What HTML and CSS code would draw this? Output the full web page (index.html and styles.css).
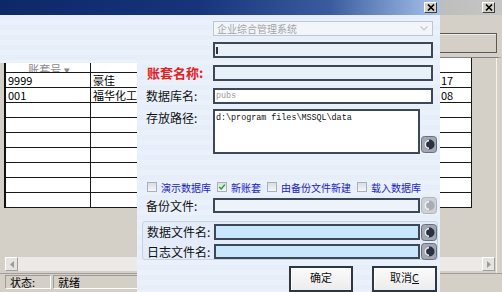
FILE: index.html
```html
<!DOCTYPE html>
<html lang="zh-CN">
<head>
    <meta charset="UTF-8">
    <title>账套管理</title>
    <link rel="stylesheet" href="styles.css">
</head>
<body>
    <div class="app">
        <div class="app-title">
            <span class="cap-btn"><svg viewBox="0 0 8 7" width="8" height="7"><path d="M1 0.5 L7 6.5 M7 0.5 L1 6.5" stroke="#000" stroke-width="1.6"/></svg></span>
        </div>
        <div class="app-toolbar"><div class="tool-box"></div></div>
        <div class="grid-area">
            <div class="grid">
                <div class="grid-row head"><div class="cell c1">账套号 ▾</div><div class="cell c2"></div><div class="cell c3"></div><div class="cell c4"></div></div>
                <div class="grid-row"><div class="cell c1">9999</div><div class="cell c2">豪佳</div><div class="cell c3"></div><div class="cell c4">17</div></div>
                <div class="grid-row"><div class="cell c1">001</div><div class="cell c2">福华化工</div><div class="cell c3"></div><div class="cell c4">08</div></div>
                <div class="grid-row"><div class="cell c1"></div><div class="cell c2"></div><div class="cell c3"></div><div class="cell c4"></div></div>
                <div class="grid-row"><div class="cell c1"></div><div class="cell c2"></div><div class="cell c3"></div><div class="cell c4"></div></div>
                <div class="grid-row"><div class="cell c1"></div><div class="cell c2"></div><div class="cell c3"></div><div class="cell c4"></div></div>
                <div class="grid-row"><div class="cell c1"></div><div class="cell c2"></div><div class="cell c3"></div><div class="cell c4"></div></div>
                <div class="grid-row"><div class="cell c1"></div><div class="cell c2"></div><div class="cell c3"></div><div class="cell c4"></div></div>
                <div class="grid-row"><div class="cell c1"></div><div class="cell c2"></div><div class="cell c3"></div><div class="cell c4"></div></div>
                <div class="grid-row"><div class="cell c1"></div><div class="cell c2"></div><div class="cell c3"></div><div class="cell c4"></div></div>
            </div>
            <div class="grid-fill"></div>
            <div class="hscroll">
                <span class="sb-btn"><svg viewBox="0 0 4 7" width="4" height="7"><path d="M4 0 L0 3.5 L4 7 Z" fill="#9a9a9a"/></svg></span>
                <span class="sb-track"></span>
                <span class="sb-btn"><svg viewBox="0 0 4 7" width="4" height="7"><path d="M0 0 L4 3.5 L0 7 Z" fill="#9a9a9a"/></svg></span>
            </div>
        </div>
        <div class="statusbar">
            <span class="panel p1">状态:</span>
            <span class="panel p2">就绪</span>
        </div>
    </div>

    <div class="dialog">
        <div class="dlg-title">
            <span class="cap-btn"><svg viewBox="0 0 8 7" width="8" height="7"><path d="M1 0.5 L7 6.5 M7 0.5 L1 6.5" stroke="#000" stroke-width="1.6"/></svg></span>
        </div>
        <div class="dlg-body">
            <div class="dlg-band"></div>
            <div class="dlg-form">
                <div class="row r-combo">
                    <span class="lbl"></span>
                    <div class="combo">企业综合管理系统<svg viewBox="0 0 8 5" width="8" height="5"><path d="M0.5 0.5 L4 4 L7.5 0.5" stroke="#c4c8d0" stroke-width="1.2" fill="none"/></svg></div>
                </div>
                <div class="row r-code">
                    <span class="lbl"></span>
                    <div class="field"><span class="caret"></span></div>
                </div>
                <div class="row r-name">
                    <span class="lbl red">账套名称:</span>
                    <div class="field"></div>
                </div>
                <div class="row r-db">
                    <span class="lbl">数据库名:</span>
                    <div class="field white mono gray">pubs</div>
                </div>
                <div class="row r-path">
                    <span class="lbl top">存放路径:</span>
                    <div class="field white mono area">d:\program files\MSSQL\data</div>
                    <span class="ico">
                        <svg viewBox="0 0 16 17" width="16" height="17"><rect x="0.5" y="0.5" width="15" height="16" rx="3" fill="#a2a8b2" stroke="#687080"/><circle cx="8.5" cy="8.5" r="5" fill="#2a3242"/><path d="M8 3.8 A4.7 4.7 0 0 0 8 13.2 L8 11.4 A2.9 2.9 0 0 1 8 5.6 Z" fill="#e4e7ec"/></svg>
                    </span>
                </div>
                <div class="checks">
                    <label class="chk"><span class="box"></span>演示数据库</label>
                    <label class="chk"><span class="box"><svg viewBox="0 0 10 10" width="8" height="8"><path d="M1.5 5 L4 7.5 L8.5 2" stroke="#1f9e2a" stroke-width="1.8" fill="none"/></svg></span>新账套</label>
                    <label class="chk"><span class="box"></span>由备份文件新建</label>
                    <label class="chk"><span class="box"></span>载入数据库</label>
                </div>
                <div class="row r-bak">
                    <span class="lbl">备份文件:</span>
                    <div class="field pale short"></div>
                    <span class="ico">
                        <svg viewBox="0 0 16 17" width="16" height="17"><rect x="0.5" y="0.5" width="15" height="16" rx="3" fill="#cdd1d6" stroke="#b0b5bc"/><circle cx="8.5" cy="8.5" r="5" fill="#a8adb4"/><path d="M8 3.8 A4.7 4.7 0 0 0 8 13.2 L8 11.4 A2.9 2.9 0 0 1 8 5.6 Z" fill="#eef0f2"/></svg>
                    </span>
                </div>
                <div class="files">
                    <div class="row r-data">
                        <span class="lbl">数据文件名:</span>
                        <div class="field cyan short"></div>
                        <span class="ico">
                            <svg viewBox="0 0 16 17" width="16" height="17"><rect x="0.5" y="0.5" width="15" height="16" rx="3" fill="#a2a8b2" stroke="#687080"/><circle cx="8.5" cy="8.5" r="5" fill="#2a3242"/><path d="M8 3.8 A4.7 4.7 0 0 0 8 13.2 L8 11.4 A2.9 2.9 0 0 1 8 5.6 Z" fill="#e4e7ec"/></svg>
                        </span>
                    </div>
                    <div class="row r-log">
                        <span class="lbl">日志文件名:</span>
                        <div class="field cyan short"></div>
                        <span class="ico">
                            <svg viewBox="0 0 16 17" width="16" height="17"><rect x="0.5" y="0.5" width="15" height="16" rx="3" fill="#a2a8b2" stroke="#687080"/><circle cx="8.5" cy="8.5" r="5" fill="#2a3242"/><path d="M8 3.8 A4.7 4.7 0 0 0 8 13.2 L8 11.4 A2.9 2.9 0 0 1 8 5.6 Z" fill="#e4e7ec"/></svg>
                        </span>
                    </div>
                </div>
                <div class="buttons">
                    <button class="btn">确定</button>
                    <button class="btn">取消<u>C</u></button>
                </div>
            </div>
        </div>
    </div>
</body>
</html>
```

FILE: styles.css
```css
* {
    box-sizing: border-box;
}
body {
    margin: 0;
    width: 502px;
    height: 292px;
    overflow: hidden;
    position: relative;
    background: #d4d0c8;
    font-family: "Noto Sans CJK SC", "Liberation Sans", sans-serif;
}

/* background window */
.app {
    display: flex;
    flex-direction: column;
    height: 292px;
}
.app > div {
    flex: none;
}
.app-title {
    height: 15px;
    background: linear-gradient(to right, #808080, #c6c6c6);
    display: flex;
    justify-content: flex-end;
    align-items: center;
    padding-right: 7px;
}
.cap-btn {
    width: 13px;
    height: 11px;
    background: #d4d0c8;
    border: 1px solid;
    border-color: #fff #404040 #404040 #fff;
    display: flex;
    align-items: center;
    justify-content: center;
}
.app-toolbar {
    height: 42px;
    display: flex;
    justify-content: flex-end;
    padding: 18px 5px 4px 0;
}
.tool-box {
    width: 200px;
    border: 1px solid #5a5a5a;
    background: #d4d0c8;
    box-shadow: inset 1px 1px 0 #f0eee8;
}
.grid-area {
    height: 216px;
    display: flex;
    flex-direction: column;
    padding-left: 4px;
    border-top: 1px solid #808080;
    border-right: 5px solid #d4d0c8;
    background: #d4d0c8;
    box-shadow: inset -1px 0 0 #f4f2ee;
}
.grid {
    width: 468px;
    border-left: 2px solid #111;
    background: #fff;
}
.grid-row {
    display: flex;
    height: 15px;
    border-bottom: 1px solid #1a1a1a;
}
.cell {
    border-right: 1px solid #1a1a1a;
    font-size: 11px;
    line-height: 14px;
    padding-left: 2px;
    white-space: nowrap;
    overflow: hidden;
}
.head .cell {
    color: #888;
    text-align: center;
    padding-top: 4px;
}
.c1 { width: 85px; }
.c2 { width: 200px; }
.c3 { width: 148px; }
.c4 { width: 33px; }
.grid-fill {
    flex: 1;
}
.hscroll {
    height: 14px;
    margin: 0 2px 2px 1px;
    display: flex;
    background: #eceae6;
}
.sb-btn {
    width: 13px;
    background: #e6e4e0;
    border: 1px solid;
    border-color: #fff #a0a0a0 #a0a0a0 #fff;
    display: flex;
    align-items: center;
    justify-content: center;
}
.sb-track {
    flex: 1;
}
.statusbar {
    height: 19px;
    display: flex;
    gap: 2px;
    padding: 1px 0 3px 5px;
    border-top: 1px solid #a0a0a0;
}
.panel {
    border: 1px solid;
    border-color: #a09c94 #fff #fff #a09c94;
    font-size: 11px;
    line-height: 13px;
    padding-left: 4px;
}
.p1 { width: 46px; }
.p2 { width: 200px; }

/* dialog */
.dialog {
    position: absolute;
    left: 0;
    top: 0;
    width: 440px;
    height: 292px;
    display: flex;
    flex-direction: column;
}
.dlg-title {
    height: 15px;
    flex: none;
    background: linear-gradient(to right, #0c2868 0%, #17347a 45%, #3a5c9e 75%, #a8c4ec 100%);
    display: flex;
    justify-content: flex-end;
    align-items: center;
    padding-right: 3px;
}
.dlg-body {
    flex: 1;
    display: grid;
    grid-template-columns: 137px 303px;
    align-items: start;
}
.dlg-band,
.dlg-form {
    background: repeating-linear-gradient(to bottom, #e6eef9 0 5px, #ebf1fa 5px 10px);
}
.dlg-band {
    height: 48px;
}
.dlg-form {
    height: 277px;
    padding-left: 9px;
    display: flex;
    flex-direction: column;
}
.row {
    display: flex;
    align-items: center;
}
.lbl {
    width: 67px;
    flex: none;
    font-size: 12px;
    line-height: 14px;
    color: #111;
    white-space: nowrap;
}
.lbl.red {
    font-size: 13px;
    font-weight: 700;
    color: #e2201c;
    margin-left: 1px;
    width: 66px;
}
.lbl.top {
    align-self: flex-start;
    margin-top: 2px;
}
.r-combo { margin-top: 6px; height: 15px; }
.r-code { margin-top: 6px; height: 16px; }
.r-name { margin-top: 7px; height: 17px; }
.r-db { margin-top: 7px; height: 17px; }
.r-path { margin-top: 5px; height: 46px; align-items: flex-end; }
.r-bak { margin-top: 5px; height: 15px; }
.r-data { height: 16px; }
.r-log { margin-top: 4px; height: 15px; }

.combo {
    width: 220px;
    height: 100%;
    border: 1px solid #bcc6d4;
    background: #f2f6fb;
    color: #a4a4a4;
    font-size: 10px;
    line-height: 13px;
    padding-left: 3px;
    display: flex;
    align-items: center;
    justify-content: space-between;
    padding-right: 4px;
}
.field {
    width: 220px;
    height: 100%;
    border: 2px solid #3c4858;
    background: #e8f0fa;
    position: relative;
}
.field.short {
    width: 207px;
}
.field.white {
    background: #fff;
}
.field.pale {
    background: #eef3fa;
}
.field.cyan {
    background: #c8e7fb;
}
.field.mono {
    font-family: "Liberation Mono", monospace;
    font-size: 8.4px;
    line-height: 12px;
    padding-left: 1px;
    color: #111;
}
.field.gray {
    color: #9a9a9a;
}
.field.area {
    width: 207px;
    line-height: 10px;
    padding-top: 2px;
}
.caret {
    position: absolute;
    left: 1px;
    top: 3px;
    width: 2px;
    height: 7px;
    background: #333;
}
.ico {
    flex: none;
    width: 16px;
    height: 17px;
    margin-left: 1px;
    display: flex;
}
.r-path .ico {
    margin-bottom: 1px;
}

.checks {
    margin-top: 27px;
    height: 12px;
    display: flex;
    align-items: center;
    gap: 6px;
    padding-left: 1px;
}
.chk {
    display: flex;
    align-items: center;
    gap: 4px;
    font-size: 10px;
    color: #2222c4;
    white-space: nowrap;
}
.box {
    width: 10px;
    height: 10px;
    border: 1px solid #a6b2c2;
    background: linear-gradient(#dadcdf, #f7f7f7);
    display: flex;
    align-items: center;
    justify-content: center;
}

.files {
    margin: 8px 0 0 -4px;
    width: 296px;
    height: 40px;
    padding: 2px 0 0 4px;
    border: 1px solid #c6d3e4;
    border-radius: 3px;
    background: #e3ecf8;
}

.buttons {
    margin-top: 6px;
    display: flex;
    justify-content: flex-end;
    gap: 19px;
    padding-right: 3px;
}
.btn {
    width: 64px;
    height: 26px;
    border: 2px solid #2e3640;
    background: linear-gradient(#fbfbfb, #ececec);
    box-shadow: inset 1px 1px 0 #fff;
    font-family: "Noto Sans CJK SC", sans-serif;
    font-size: 11px;
    color: #111;
    padding: 0 0 4px;
}
.btn + .btn {
    width: 65px;
}
```
